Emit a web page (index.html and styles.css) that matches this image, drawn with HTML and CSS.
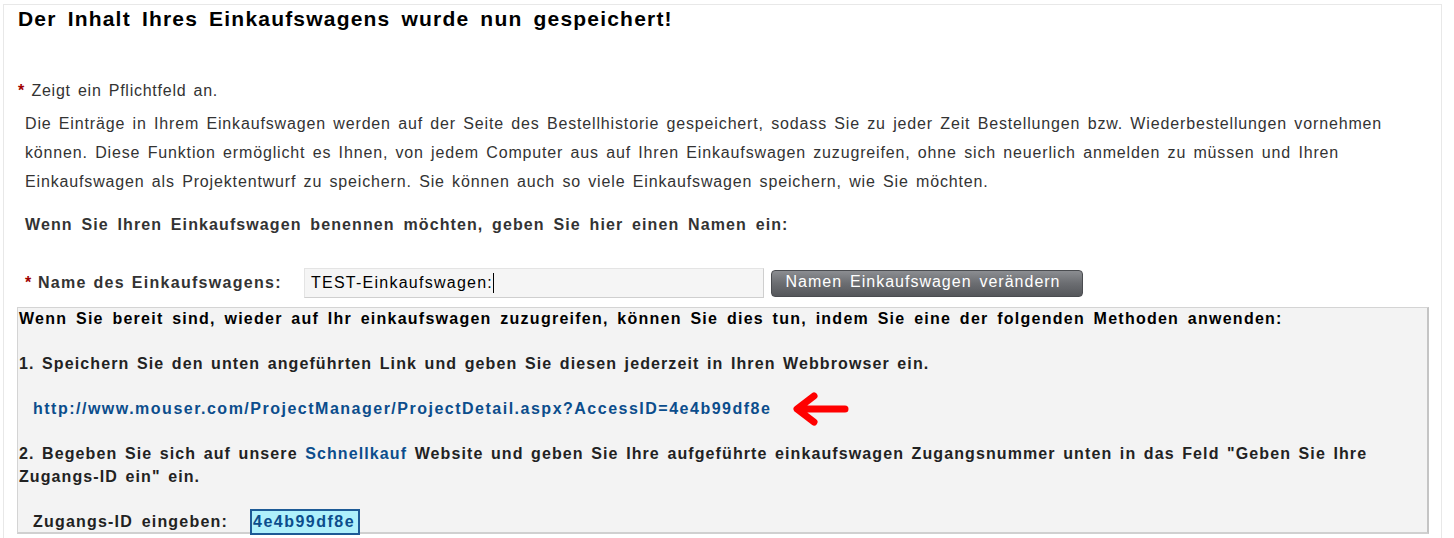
FILE: index.html
```html
<!DOCTYPE html>
<html lang="de">
<head>
<meta charset="utf-8">
<title>Einkaufswagen gespeichert</title>
<link rel="stylesheet" href="styles.css">
</head>
<body>
<div class="page">
  <h1 class="title">Der Inhalt Ihres Einkaufswagens wurde nun gespeichert!</h1>
  <p class="required"><span class="star">*</span> Zeigt ein Pflichtfeld an.</p>
  <p class="intro">Die Einträge in Ihrem Einkaufswagen werden auf der Seite des Bestellhistorie gespeichert, sodass Sie zu jeder Zeit Bestellungen bzw. Wiederbestellungen vornehmen können. Diese Funktion ermöglicht es Ihnen, von jedem Computer aus auf Ihren Einkaufswagen zuzugreifen, ohne sich neuerlich anmelden zu müssen und Ihren Einkaufswagen als Projektentwurf zu speichern. Sie können auch so viele Einkaufswagen speichern, wie Sie möchten.</p>
  <p class="question">Wenn Sie Ihren Einkaufswagen benennen möchten, geben Sie hier einen Namen ein:</p>
  <div class="name-row">
    <label class="name-label"><span class="star">*</span> Name des Einkaufswagens:</label>
    <div class="name-input">TEST-Einkaufswagen:<span class="caret"></span></div>
    <button class="btn">Namen Einkaufswagen verändern</button>
  </div>
  <div class="info">
    <p class="info-head">Wenn Sie bereit sind, wieder auf Ihr einkaufswagen zuzugreifen, können Sie dies tun, indem Sie eine der folgenden Methoden anwenden:</p>
    <p class="step">1. Speichern Sie den unten angeführten Link und geben Sie diesen jederzeit in Ihren Webbrowser ein.</p>
    <div class="link-row">
      <a class="link" href="#">http://www.mouser.com/ProjectManager/ProjectDetail.aspx?AccessID=4e4b99df8e</a>
      <svg class="arrow" width="56" height="34" viewBox="0 0 56 34">
        <path d="M52 17 H6 M21 4 L4 17 L21 30" fill="none" stroke="#ff0000" stroke-width="7" stroke-linecap="round" stroke-linejoin="round"/>
      </svg>
    </div>
    <p class="step step2">2. Begeben Sie sich auf unsere <a class="inline-link" href="#">Schnellkauf</a> Website und geben Sie Ihre aufgeführte einkaufswagen Zugangsnummer unten in das Feld "Geben Sie Ihre Zugangs-ID ein" ein.</p>
    <div class="id-row">
      <span class="id-label">Zugangs-ID eingeben:</span>
      <span class="id-box">4e4b99df8e</span>
    </div>
  </div>
</div>
</body>
</html>
```
FILE: styles.css
```css
html, body {
  margin: 0;
  padding: 0;
  background: #ffffff;
}
body {
  font-family: "Liberation Sans", Arial, sans-serif;
  color: #333333;
}
.page {
  margin: 4px 12px 0 3px;
  border: 1px solid #e8e8e8;
  border-bottom: none;
  padding: 0 12px 0 13px;
  height: 540px;
  box-sizing: border-box;
}
.title {
  margin: 0;
  padding: 1px 0 0 1px;
  font-size: 21px;
  line-height: 26px;
  font-weight: bold;
  color: #000;
  letter-spacing: 1.2px;
  word-spacing: 4px;
}
.star {
  color: #a00000;
  font-weight: bold;
  letter-spacing: 0;
}
.required {
  margin: 49px 0 0 1px;
  font-size: 16px;
  line-height: 20px;
  letter-spacing: 0.75px;
  word-spacing: 2px;
}
.intro {
  margin: 8px 0 0 8px;
  font-size: 16px;
  line-height: 29px;
  letter-spacing: 0.85px;
  word-spacing: 2px;
}
.question {
  margin: 19px 0 0 8px;
  font-size: 16px;
  line-height: 20px;
  font-weight: bold;
  letter-spacing: 1.1px;
  word-spacing: 3.2px;
}
.name-row {
  display: flex;
  align-items: center;
  margin: 32px 0 0 8px;
  height: 32px;
}
.name-label {
  font-size: 16px;
  font-weight: bold;
  letter-spacing: 1.3px;
  word-spacing: 1px;
  width: 279px;
  flex: none;
}
.name-input {
  width: 460px;
  height: 30px;
  box-sizing: border-box;
  border: 1px solid #cfcfcf;
  border-top-color: #e4e4e4;
  border-left-color: #e4e4e4;
  background: #f5f5f5;
  color: #000;
  font-size: 16px;
  padding-left: 6px;
  letter-spacing: 1.25px;
  flex: none;
  display: flex;
  align-items: center;
}
.caret {
  display: inline-block;
  width: 1px;
  height: 20px;
  background: #000;
  margin-left: 0;
}
.btn {
  margin-left: 7px;
  width: 312px;
  height: 27px;
  border: 1px solid #4a4c50;
  border-radius: 4px;
  background: linear-gradient(#8b8d91, #6b6d71 50%, #55575b);
  color: #ffffff;
  font-family: "Liberation Sans", Arial, sans-serif;
  font-size: 16px;
  letter-spacing: 1px;
  word-spacing: 2.5px;
  padding: 0 8px 2px 0;
  flex: none;
}
.info {
  margin-top: 8px;
  background: #f3f3f3;
  border: 1px solid #d4d4d4;
  border-right: 2px solid #c4c4c4;
  border-bottom: 2px solid #d0d0d0;
  height: 227px;
  box-sizing: border-box;
  padding: 1px 0 0 1px;
  color: #222;
}
.info p {
  margin: 0;
}
.info-head {
  font-size: 16px;
  line-height: 20px;
  font-weight: bold;
  color: #000;
  letter-spacing: 1.25px;
  word-spacing: 3px;
}
.step {
  font-size: 16px;
  line-height: 23px;
  font-weight: bold;
  letter-spacing: 1.1px;
  word-spacing: 2px;
}
.info .step {
  margin-top: 23px;
}
.link-row {
  display: flex;
  align-items: center;
  margin: 20px 0 0 14px;
  height: 28px;
}
.link {
  color: #0b4d8c;
  font-size: 16px;
  font-weight: bold;
  text-decoration: none;
  letter-spacing: 1.5px;
}
.arrow {
  margin-left: 22px;
  flex: none;
}
.info .step2 {
  margin-top: 19px;
  padding-right: 30px;
}
.inline-link {
  color: #0b4d8c;
  text-decoration: none;
}
.id-row {
  display: flex;
  align-items: center;
  margin: 21px 0 0 14px;
}
.id-label {
  font-size: 16px;
  font-weight: bold;
  letter-spacing: 1.2px;
  word-spacing: 3px;
  width: 217px;
  flex: none;
}
.id-box {
  width: 110px;
  box-sizing: border-box;
  border: 2px solid #1d5a96;
  background: #aef0fb;
  color: #0b4d8c;
  font-size: 16px;
  line-height: 19px;
  font-weight: bold;
  letter-spacing: 1.5px;
  padding: 1px 0 2px 1px;
  white-space: nowrap;
}
```
